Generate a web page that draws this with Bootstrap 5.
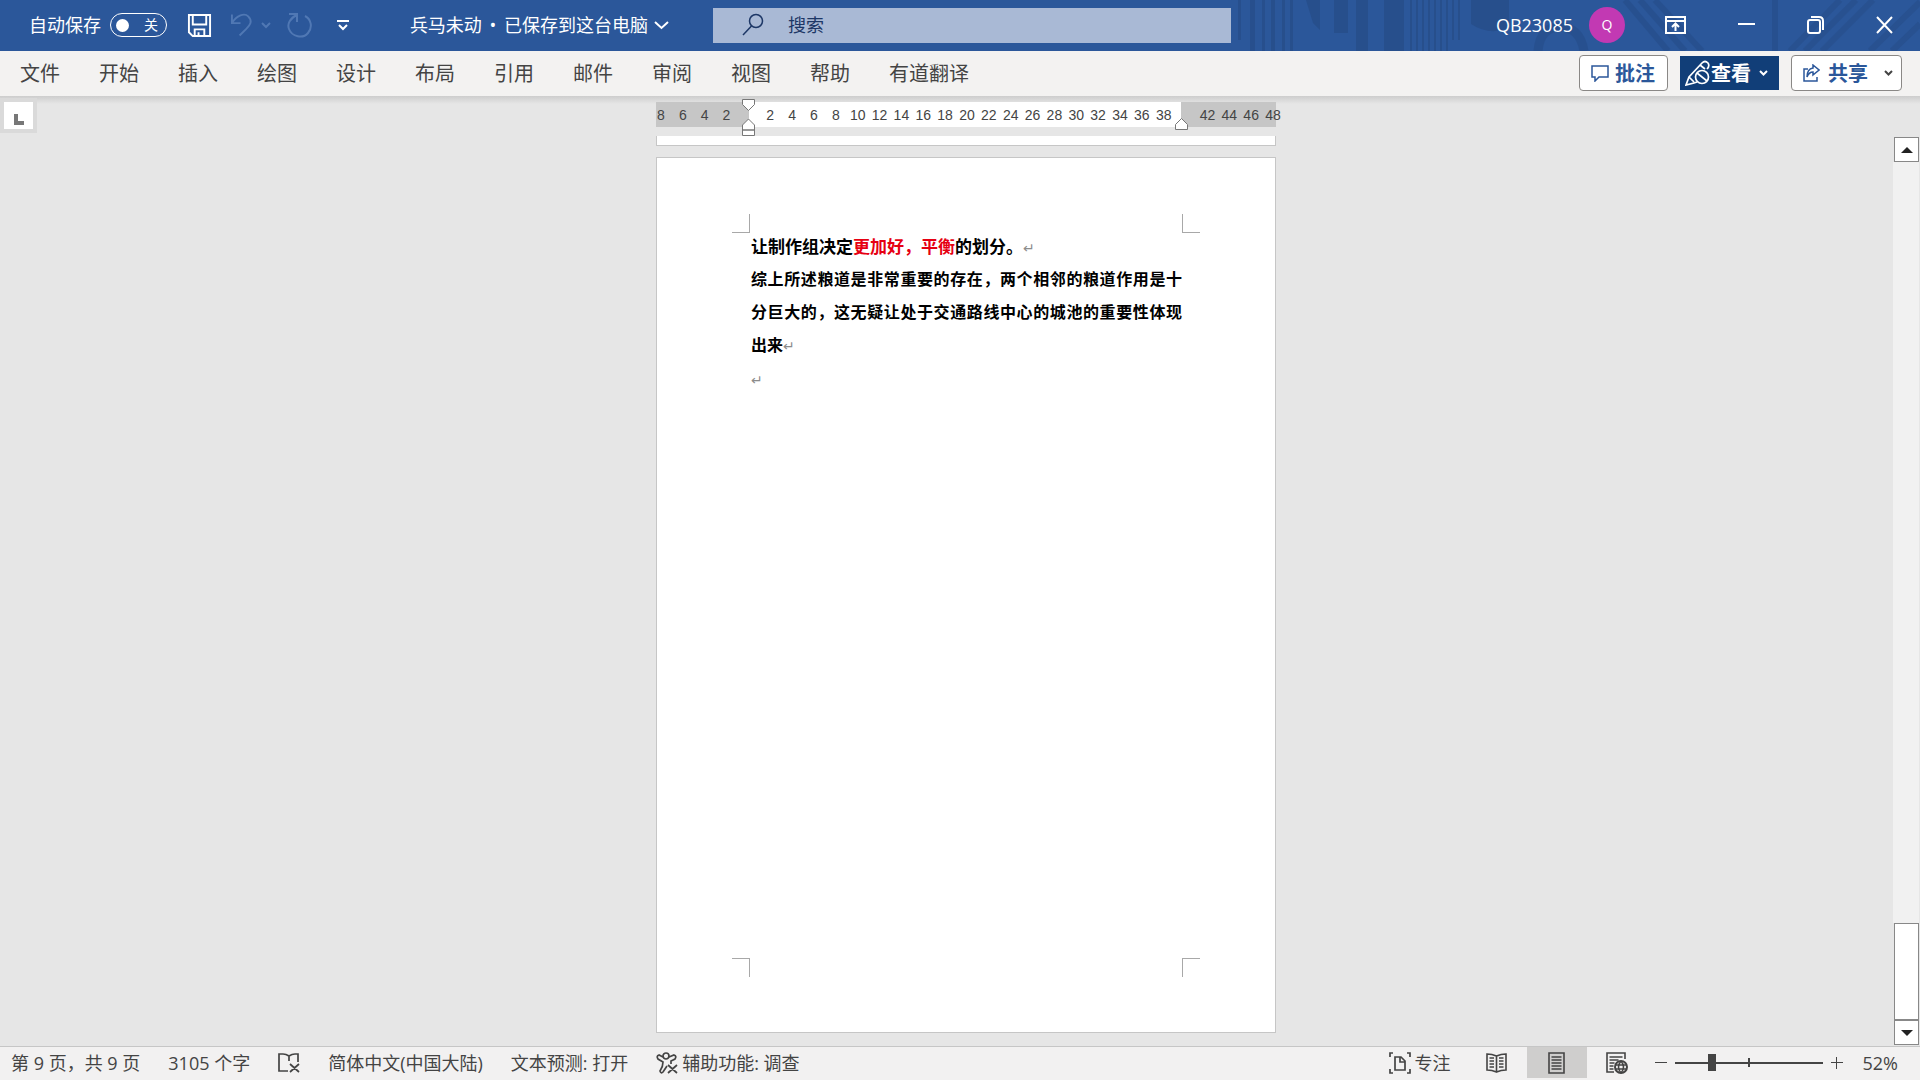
<!DOCTYPE html>
<html lang="zh-CN">
<head>
<meta charset="utf-8">
<meta name="viewport" content="width=device-width, initial-scale=1">
<title>兵马未动 - Word</title>
<link href="https://cdn.jsdelivr.net/npm/bootstrap@5.3.0/dist/css/bootstrap.min.css" rel="stylesheet">
<style>
  body { font-family: "Open Sans", "Noto Sans CJK SC", sans-serif; font-size: 18px; line-height: 24px; color: #444; background: #e6e6e6; }
  svg { display: block; flex: none; fill: none; stroke: currentColor; stroke-width: 2; }
  button { color: inherit; }
  .plain { background: none; border: 0; padding: 0; }
  .han { font-family: "Noto Sans CJK SC", sans-serif; }

  /* title bar */
  .titlebar { height: 51px; background: #2b579a; color: #fff; position: relative; padding-bottom: 1px; }
  .titlebar > .pattern { position: absolute; right: 0; top: 0; width: 690px; height: 51px; stroke: none; }
  .titlebar > div { position: relative; min-width: 0; }
  .side-left { flex: 684 1 0; padding-left: 29px; }
  .side-mid { flex: 518 1 0; }
  .side-right { flex: 662 1 0; padding-right: 27px; }
  .titlebar .autosave { width: 57px; height: 24px; border: 1px solid #fff; border-radius: 12px; font-size: 14px; line-height: 20px; padding: 0 8px 0 5px; margin-left: 9px; }
  .knob { width: 13px; height: 13px; border-radius: 50%; background: #fff; }
  .faded { color: #5078b4; }
  .undo-group { margin-left: 18px; }
  .bullet { margin: 0 3px; }
  .doc-title { gap: 6px; margin-right: 44px; }
  .search-box { height: 35px; background: #a9b9d5; color: #1d3766; padding-left: 28px; }
  .search-box input { background: none; border: 0; outline: 0; padding: 0; color: inherit; margin-left: 23px; }
  .search-box input::placeholder { color: #1d3766; opacity: 1; }
  .avatar { width: 36px; height: 36px; border-radius: 50%; background: #c239b3; font-size: 14px; margin-left: 16px; }

  /* ribbon */
  .ribbon { height: 45px; background: #f3f2f1; padding: 0 18px 2px 0; }
  .ribbon-tabs { padding-left: 20px; gap: 39px; font-size: 20px; }
  .ribbon-tabs a { color: #444; text-decoration: none; white-space: nowrap; }
  .ribbon-actions { gap: 12px; }
  .ribbon-btn { height: 36px; font-size: 20px; font-weight: 700; color: #2b579a; background: #fff; border: 1px solid #8a8886; border-radius: 4px; white-space: nowrap; padding: 0 12px 0 11px; gap: 6px; }
  .ribbon-btn.sharing { padding: 0 8px 0 11px; gap: 8px; }
  .ribbon-btn.viewing { background: #113e78; border: 0; border-radius: 0; color: #fff; height: 34px; padding: 0 11px 0 5px; gap: 0; }

  /* workspace */
  .workspace { min-height: 0; background: linear-gradient(#cdcdcd, #e6e6e6 8px); }
  .rail { width: 39px; padding-top: 2px; }
  .tab-kind { width: 37px; height: 35px; border: 4px solid #dadada; background: #fff; color: #777; }
  .doc-col { padding-top: 6px; padding-bottom: 13px; }
  .ruler-bar { width: 620px; height: 25px; position: relative; color: #444; font: 14px/27px "Liberation Sans", sans-serif; }
  .ruler-bar .margin-l { width: 93px; background: #c6c6c6; }
  .ruler-bar .margin-r { width: 95px; background: #c6c6c6; }
  .ruler-nums { position: absolute; left: -6px; top: 0; width: 634px; }
  .ruler-nums span { flex: 1 1 0; text-align: center; }
  .marker { position: absolute; fill: #fff; stroke: #777; stroke-width: 1; }
  .marker-start { left: 86px; top: -3px; }
  .marker-end { left: 519px; top: 16px; }
  .prev-sheet { width: 620px; height: 10px; margin-top: 9px; background: #fff; border: 1px solid #c6c6c6; border-top: 0; }
  .sheet { width: 620px; margin-top: 11px; background: #fff; border: 1px solid #c6c6c6; position: relative; padding: 71px 93px 0 94px; color: #000; font: 700 17px/33px "Noto Sans CJK SC", sans-serif; }
  .sheet p { margin: 0; }
  .sheet .justified { font-size: 16px; text-align: justify; }
  .red-run { color: #e60012; }
  .sheet .ret { font: 14px/1 "DejaVu Sans", sans-serif; color: #8c8c8c; }
  .crop { position: absolute; width: 18px; height: 19px; border: 0 solid #a8a8a8; }
  .crop-tl { left: 75px; top: 56px; border-width: 0 1px 1px 0; }
  .crop-tr { right: 75px; top: 56px; border-width: 0 0 1px 1px; }
  .crop-bl { left: 75px; bottom: 55px; border-width: 1px 1px 0 0; }
  .crop-br { right: 75px; bottom: 55px; border-width: 1px 0 0 1px; }
  .scroller { width: 27px; padding: 41px 1px 1px 0; }
  .scroller button { height: 25px; background: #fff; border: 1px solid #888; margin-left: 1px; color: #222; }
  .scroller .track { background: #f1f1f1; }
  .scroller .thumb { height: 97px; background: #fff; border: 1px solid #888; margin-left: 1px; }

  /* status bar */
  .statusbar { height: 34px; background: #f2f1f1; border-top: 1px solid #c6c6c6; padding: 0 22px 2px 11px; white-space: nowrap; }
  .status-info { gap: 28px; }
  .view-btn { width: 60px; }
  .view-btn.active { background: #cfcecd; }
  .zoom-value { margin-left: 20px; }
  .zoom-range { -webkit-appearance: none; appearance: none; width: 148px; height: 17px; margin: 0 8px; background: linear-gradient(#444, #444) 50% 50% / 2px 9px no-repeat, linear-gradient(#444, #444) 50% 50% / 100% 2px no-repeat; }
  .zoom-range::-webkit-slider-thumb { -webkit-appearance: none; width: 8px; height: 17px; background: #444; border: 0; border-radius: 0; }
</style>
</head>
<body class="vh-100 d-flex flex-column overflow-hidden">

<header class="titlebar d-flex align-items-center flex-shrink-0">
  <svg class="pattern" viewBox="0 0 690 51" preserveAspectRatio="none" aria-hidden="true">
    <g fill="#254b86" opacity=".65">
      <path d="M8 0h3v40h-3zM20 0h5v51h-5zM32 0h3v51h-3zM41 0h4v51h-4zM52 0h3v51h-3zM60 0h3v51h-3zM76 0h14v30l-7-7zM104 0h14v33h-14zM126 0h12v51h-12zM154 0h20v51h-20z"/>
      <path d="M180 0h2v51h-2zM186 0h2v51h-2zM192 0h2v51h-2zM198 0h2v51h-2zM204 0h2v51h-2zM210 0h2v51h-2zM216 0h2v51h-2zM222 0h2v40h-2zM228 0h2v40h-2zM241 0h38v28q-20 8-38-4z"/>
    </g>
    <g stroke="#254b86" stroke-width="6" opacity=".5">
      <path d="M545 0V51M395 0L438 51M410 0L455 51M425 0L472 51M560 51L610 0M575 51L626 0M592 51L643 0M640 51L690 2M662 51L690 24"/>
      <path d="M308 51q2-24 22-24t24 24" stroke-width="9"/>
    </g>
  </svg>
  <div class="side-left d-flex align-items-center">
    <span id="autosave-label">自动保存</span>
    <button class="plain autosave d-flex align-items-center justify-content-between" role="switch" aria-checked="false" aria-labelledby="autosave-label"><span class="knob"></span><span>关</span></button>
    <button class="plain ms-3 ps-1" aria-label="保存"><svg width="25" height="25" viewBox="0 0 26 26"><path d="M2 2h22v22H6l-4-4zM6 2v10h14V2M8 24v-7h10v7M12 24v-4"/></svg></button>
    <button class="plain faded undo-group d-flex align-items-center gap-2" aria-label="撤消"><svg width="23" height="26" viewBox="0 0 24 26"><path d="M2 2v9h9M2 11C7 3 15 0 19 4c5 5 2 9-2 13l-7 7"/></svg><svg width="10" height="8" viewBox="0 0 10 8"><path d="M1 2l4 4 4-4"/></svg></button>
    <button class="plain faded ms-3" aria-label="重复"><svg width="26" height="26" viewBox="0 0 26 26"><path d="M2 2h8v8M10 3C3 6 0 12 2 17c3 8 14 10 19 4 5-6 3-14-3-17"/></svg></button>
    <button class="plain ms-4" aria-label="自定义快速访问工具栏"><svg width="12" height="12" viewBox="0 0 12 12"><path d="M0 2h12M2 6l4 4 4-4"/></svg></button>
    <button class="plain doc-title d-flex align-items-center text-nowrap ms-auto"><span>兵马未动<span class="bullet"> • </span>已保存到这台电脑</span><svg width="15" height="10" viewBox="0 0 15 10"><path d="M1 2l6.500 6L14 2"/></svg></button>
  </div>
  <div class="side-mid">
    <label class="search-box d-flex align-items-center"><svg width="24" height="24" viewBox="0 0 24 24"><circle cx="15" cy="8" r="6.500" stroke-width="1.500"/><path d="M10.500 13L2 22" stroke-width="1.500"/></svg><input class="flex-fill" type="search" placeholder="搜索" aria-label="搜索"></label>
  </div>
  <div class="side-right d-flex align-items-center justify-content-end">
    <span>QB23085</span>
    <span class="avatar d-flex align-items-center justify-content-center">Q</span>
    <div class="d-flex align-items-center gap-5 ps-4">
      <button class="plain ps-3" aria-label="功能区显示选项"><svg width="21" height="18" viewBox="0 0 21 18"><path d="M1 1h19v16H1zM1 5h19M10.500 15V8M7 11l3.500-3.500L14 11"/></svg></button>
      <button class="plain ps-1" aria-label="最小化"><svg width="17" height="18" viewBox="0 0 17 18"><path d="M0 8h17"/></svg></button>
      <button class="plain ps-1" aria-label="还原"><svg width="17" height="18" viewBox="0 0 17 18"><rect x="1" y="4" width="12" height="13" rx="2"/><path d="M4 1h8q4 0 4 4v9"/></svg></button>
      <button class="plain ps-1" aria-label="关闭"><svg width="17" height="18" viewBox="0 0 17 18"><path d="M1 1l15 16M16 1L1 17"/></svg></button>
    </div>
  </div>
</header>

<nav class="ribbon d-flex align-items-center flex-shrink-0">
  <div class="ribbon-tabs d-flex han">
    <a href="#">文件</a><a href="#">开始</a><a href="#">插入</a><a href="#">绘图</a><a href="#">设计</a><a href="#">布局</a><a href="#">引用</a><a href="#">邮件</a><a href="#">审阅</a><a href="#">视图</a><a href="#">帮助</a><a href="#">有道翻译</a>
  </div>
  <div class="ribbon-actions d-flex align-items-center ms-auto han">
    <button class="ribbon-btn d-flex align-items-center"><svg width="18" height="18" viewBox="0 0 18 18"><path stroke-width="1.500" d="M1 2h16v11H8l-4 4v-4H1z"/></svg>批注</button>
    <button class="ribbon-btn viewing d-flex align-items-center"><svg width="26" height="26" viewBox="0 0 26 26"><path stroke-width="1.700" d="M12 22l-3 1-8 2 3-8L17 3q3-3 6 0 2 3-1 6M4 17l5 5M15 5l5 4"/><circle cx="17" cy="17" r="6.500" stroke-width="1.700"/><path d="M12 13l10 8" stroke-width="1.700"/></svg>查看<svg class="ms-2" width="9" height="8" viewBox="0 0 9 8"><path d="M1 2l3.500 3.500L8 2"/></svg></button>
    <button class="ribbon-btn sharing d-flex align-items-center"><svg width="17" height="18" viewBox="0 0 17 18"><path stroke-width="1.500" d="M5 5H1v12h13v-4M10 1l6 5-6 5V8q-4 0-6 5 0-8 6-9z"/></svg>共享<svg class="ms-2" width="9" height="8" viewBox="0 0 9 8"><path stroke="#444" d="M1 2l3.500 3.500L8 2"/></svg></button>
  </div>
</nav>

<main class="workspace flex-fill d-flex">
  <div class="rail flex-shrink-0">
    <button class="plain tab-kind d-flex align-items-end justify-content-center pb-1" aria-label="左对齐制表符"><svg width="10" height="12" viewBox="0 0 10 12"><path stroke-width="4" d="M2 1v9h8"/></svg></button>
  </div>
  <div class="doc-col flex-fill d-flex flex-column align-items-center">
    <div class="ruler-bar d-flex flex-shrink-0">
      <div class="margin-l"></div><div class="flex-fill bg-white"></div><div class="margin-r"></div>
      <div class="ruler-nums d-flex"><span>8</span><span>6</span><span>4</span><span>2</span><span></span><span>2</span><span>4</span><span>6</span><span>8</span><span>10</span><span>12</span><span>14</span><span>16</span><span>18</span><span>20</span><span>22</span><span>24</span><span>26</span><span>28</span><span>30</span><span>32</span><span>34</span><span>36</span><span>38</span><span></span><span>42</span><span>44</span><span>46</span><span>48</span></div>
      <svg class="marker marker-start" width="13" height="37" viewBox="0 0 13 37"><path d="M.5.500h12v5l-6 6-6-6zM.5 31v-5l6-6 6 6v5zM.5 31h12v5.500H.5z"/></svg>
      <svg class="marker marker-end" width="13" height="12" viewBox="0 0 13 12"><path d="M.5 11.500v-5l6-6 6 6v5z"/></svg>
    </div>
    <div class="prev-sheet flex-shrink-0"></div>
    <article class="sheet flex-fill">
      <i class="crop crop-tl"></i><i class="crop crop-tr"></i><i class="crop crop-bl"></i><i class="crop crop-br"></i>
      <p>让制作组决定<span class="red-run">更加好，平衡</span>的划分。<span class="ret">↵</span></p>
      <p class="justified">综上所述粮道是非常重要的存在，两个相邻的粮道作用是十分巨大的，这无疑让处于交通路线中心的城池的重要性体现出来<span class="ret">↵</span></p>
      <p><span class="ret">↵</span></p>
    </article>
  </div>
  <div class="scroller flex-shrink-0 d-flex flex-column">
    <button class="p-0 d-flex align-items-center justify-content-center" aria-label="向上滚动"><svg width="12" height="6" viewBox="0 0 12 6"><path d="M6 0l6 6H0z" fill="#222" stroke="none"/></svg></button>
    <div class="track flex-fill"></div>
    <div class="thumb"></div>
    <button class="p-0 d-flex align-items-center justify-content-center" aria-label="向下滚动"><svg width="12" height="6" viewBox="0 0 12 6"><path d="M0 0h12L6 6z" fill="#222" stroke="none"/></svg></button>
  </div>
</main>

<footer class="statusbar d-flex align-items-stretch flex-shrink-0">
  <div class="status-info d-flex align-items-center">
    <span>第 9 页，共 9 页</span>
    <span>3105 个字</span>
    <button class="plain" aria-label="校对"><svg width="22" height="20" viewBox="0 0 22 20"><path stroke-width="1.700" d="M11 3q-3-2-6-2H1v17h9M11 8V3q3-2 6-2h3v8M12 11l9 8M21 11l-9 8"/></svg></button>
    <span>简体中文(中国大陆)</span>
    <span>文本预测: 打开</span>
    <span class="d-flex align-items-center gap-1"><svg width="22" height="22" viewBox="0 0 22 22"><path stroke-width="1.700" d="M7 5L3 3Q0 4 2 7l5 3q0 5-3 9 1 3 3 1l4-6M13 5l5-2q3 1 1 4l-4 2v3M12 13l9 8M21 13l-9 8"/><circle cx="10" cy="4" r="3" stroke-width="1.700"/></svg>辅助功能: 调查</span>
  </div>
  <div class="d-flex align-items-stretch ms-auto">
    <button class="plain d-flex align-items-center me-3"><svg class="me-1" width="22" height="22" viewBox="0 0 22 22"><path d="M4 1H1v4M18 1h3v4M4 21H1v-4M18 21h3v-4M6 5h6l4 4v9H6zM11 5v5h5" stroke-width="1.700"/></svg>专注</button>
    <button class="plain view-btn d-flex align-items-center justify-content-center" aria-label="阅读视图"><svg width="21" height="20" viewBox="0 0 21 20"><path stroke-width="1.600" d="M10.500 3Q6 1 1 1v16q5 0 9.500 2Q15 17 20 17V1q-5 0-9.500 2v16M3.500 5H8M3.500 8H8M3.500 11H8M3.500 14H8M13 5h4.500M13 8h4.500M13 11h4.500M13 14h4.500"/></svg></button>
    <button class="plain view-btn active d-flex align-items-center justify-content-center" aria-label="页面视图"><svg width="17" height="22" viewBox="0 0 17 22"><path stroke-width="1.600" d="M1 1h15v20H1zM3.500 5h10M3.500 8h10M3.500 11h10M3.500 14h10M3.500 17h10"/></svg></button>
    <button class="plain view-btn d-flex align-items-center justify-content-center" aria-label="Web 版式视图"><svg width="22" height="22" viewBox="0 0 22 22"><path stroke-width="1.600" d="M8 20H1V1h18v6M3.500 5h13M3.500 8h9M3.500 11h5M3.500 14h4M3.500 17h4"/><circle cx="15" cy="15" r="6"/><path stroke-width="1.500" d="M9 13h12M9 17h12M15 9q-5 6 0 12M15 9q5 6 0 12"/></svg></button>
    <div class="d-flex align-items-center ps-2">
      <button class="plain" aria-label="缩小"><svg width="12" height="12" viewBox="0 0 12 12"><path stroke-width="1" d="M0 5.500h12"/></svg></button>
      <input class="zoom-range" type="range" min="0" max="100" value="24" aria-label="显示比例">
      <button class="plain" aria-label="放大"><svg width="12" height="12" viewBox="0 0 12 12"><path stroke-width="1" d="M0 5.500h12M5.500 0v12"/></svg></button>
      <span class="zoom-value">52%</span>
    </div>
  </div>
</footer>
<script src="https://cdn.jsdelivr.net/npm/bootstrap@5.3.0/dist/js/bootstrap.bundle.min.js"></script>
</body>
</html>
